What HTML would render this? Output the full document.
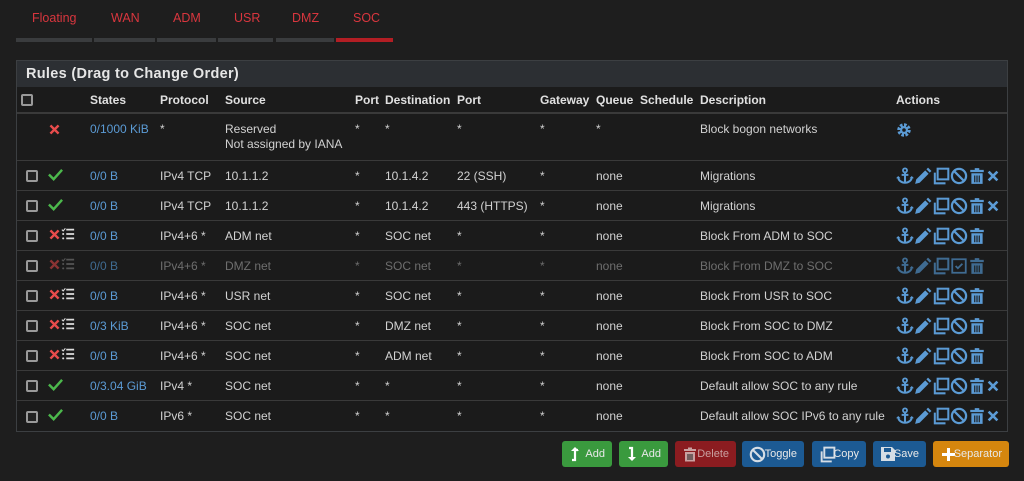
<!DOCTYPE html>
<html><head><meta charset="utf-8"><style>
*{box-sizing:border-box;margin:0;padding:0}
body{width:1024px;height:481px;background:#1e1e1e;font-family:"Liberation Sans",sans-serif;font-size:12px;color:#d2d2d2;position:relative;overflow:hidden}
.tab{position:absolute;top:11px;color:#d9363e;font-size:12.5px}
.ul{position:absolute;top:38px;height:4px;background:#3a3c3e}
.panel{position:absolute;left:16px;top:60px;width:992px;height:372px;border:1px solid #3c3f42;background:#1b1b1b}
.ph{height:26px;background:#2c2f33;color:#e6e6e6;font-size:14.5px;font-weight:bold;padding:5px 0 0 9px;letter-spacing:.3px}
table{border-collapse:collapse;table-layout:fixed;width:990px}
td,th{padding:0 0 0 4px;white-space:nowrap;overflow:visible;vertical-align:middle;text-align:left}
th{height:26px;font-weight:bold;color:#e0e0e0;border-bottom:2px solid #3a3a3a}
tr.r td{height:30px;border-top:1px solid #3a3a3a}
tr.b td{height:47px;vertical-align:top;padding-top:8px;line-height:15px}
.bl{color:#5b9bd5}
.dis td{color:#6e6e6e}.dis .bl{color:#3f6b91}
.cb{display:inline-block;width:12px;height:12px;border:2px solid #9a9a9a;border-radius:2px;background:#222;margin-left:5px;vertical-align:middle}
.ic{display:inline-block;vertical-align:middle}
.act svg{vertical-align:middle;margin-right:0}
.btn{position:absolute;top:441px;height:26px;border-radius:3px;color:#e8e8e8;font-size:11px}
.btn svg{position:absolute;left:7px;top:5px}
.btn span{position:absolute;right:7px;top:7px}
</style></head><body>
<div class="tab" style="left:32px">Floating</div>
<div class="tab" style="left:111px">WAN</div>
<div class="tab" style="left:173px">ADM</div>
<div class="tab" style="left:234px">USR</div>
<div class="tab" style="left:292px">DMZ</div>
<div class="tab" style="left:353px">SOC</div>
<div class="ul" style="left:16px;width:76px"></div>
<div class="ul" style="left:94px;width:61px"></div>
<div class="ul" style="left:157px;width:59px"></div>
<div class="ul" style="left:218px;width:55px"></div>
<div class="ul" style="left:276px;width:58px"></div>
<div class="ul" style="left:336px;width:57px;background:#b31e24"></div>

<svg width="0" height="0" style="position:absolute"><defs>
<symbol id="anc" viewBox="0 0 16 16"><circle cx="8" cy="3" r="1.8" fill="none" stroke="currentColor" stroke-width="1.6"/><path d="M8 5v9M5 7h6M2 9c0 3 3 5 6 5s6-2 6-5" fill="none" stroke="currentColor" stroke-width="1.8"/><path d="M0 10l2-2 2 2M12 10l2-2 2 2" fill="currentColor"/></symbol>
<symbol id="pen" viewBox="0 0 16 16"><path d="M1 15l1-4 8-8 3 3-8 8z M11 2l1.5-1.5 3 3L14 5z" fill="currentColor"/></symbol>
<symbol id="cp" viewBox="0 0 16 16"><rect x="5" y="1.5" width="9.5" height="9.5" fill="none" stroke="currentColor" stroke-width="1.8"/><path d="M2.5 5v9.5H12" fill="none" stroke="currentColor" stroke-width="1.8"/></symbol>
<symbol id="ban" viewBox="0 0 16 16"><circle cx="8" cy="8" r="6.3" fill="none" stroke="currentColor" stroke-width="2"/><path d="M3.5 3.5l9 9" stroke="currentColor" stroke-width="2"/></symbol>
<symbol id="chk" viewBox="0 0 16 16"><rect x="2" y="2" width="12" height="12" fill="none" stroke="currentColor" stroke-width="1.6"/><path d="M5 8l2 2 4-4" fill="none" stroke="currentColor" stroke-width="1.6"/></symbol>
<symbol id="tr" viewBox="0 0 16 16"><path d="M2 2.5h12v2H2zM6 1h4v2H6zM3 5.5h10v9.5H3z" fill="currentColor"/><path d="M6 7.5v6M8 7.5v6M10 7.5v6" stroke="#1b1b1b" stroke-width="1"/></symbol>
<symbol id="x" viewBox="0 0 16 16"><path d="M3 3l10 10M13 3L3 13" stroke="currentColor" stroke-width="3"/></symbol>
<symbol id="ok" viewBox="0 0 16 16"><path d="M1 8l5 5 9-10" fill="none" stroke="currentColor" stroke-width="2.6"/></symbol>
<symbol id="lst" viewBox="0 0 16 16"><path d="M1 3l1.5 1.5L5 1.5" fill="none" stroke="currentColor" stroke-width="1.3"/><circle cx="2.5" cy="8" r="1.2" fill="currentColor"/><circle cx="2.5" cy="13" r="1.2" fill="currentColor"/><path d="M6 3h9M6 8h9M6 13h9" stroke="currentColor" stroke-width="2"/></symbol>
</defs></svg>

<div class="panel">
<div class="ph">Rules (Drag to Change Order)</div>
<table>
<colgroup><col style="width:29px"><col style="width:40px"><col style="width:70px"><col style="width:65px"><col style="width:130px"><col style="width:30px"><col style="width:72px"><col style="width:83px"><col style="width:56px"><col style="width:44px"><col style="width:60px"><col style="width:196px"><col style="width:115px"></colgroup>
<tr><th><span class="cb" style="margin-left:0"></span></th><th></th><th>States</th><th>Protocol</th><th>Source</th><th>Port</th><th>Destination</th><th>Port</th><th>Gateway</th><th>Queue</th><th>Schedule</th><th>Description</th><th>Actions</th></tr>
<tr class="b"><td></td><td><svg class="ic" width="13" height="13" style="color:#e84c4c;margin-left:-2px"><use href="#x"/></svg></td><td class="bl">0/1000 KiB</td><td>*</td><td>Reserved<br>Not assigned by IANA</td><td>*</td><td>*</td><td>*</td><td>*</td><td>*</td><td></td><td>Block bogon networks</td><td><svg width="16" height="16" viewBox="0 0 16 16" style="color:#5b9bd5"><circle cx="8" cy="8" r="5" fill="none" stroke="currentColor" stroke-width="3.5" stroke-dasharray="2.5 1.4"/><circle cx="8" cy="8" r="4" fill="currentColor"/><circle cx="8" cy="8" r="1.8" fill="#1b1b1b"/></svg></td></tr>
</table>
<table id="t2"></table>
</div>

<div class="btn" style="left:562px;width:50px;background:#3a9a3e"><svg width="12" height="16" viewBox="0 0 12 14"><path d="M3 13h3V3h3" fill="none" stroke="#fff" stroke-width="2.2"/><path d="M6 0l4 4H2z" fill="#fff"/></svg><span>Add</span></div>
<div class="btn" style="left:619px;width:49px;background:#3a9a3e"><svg width="12" height="16" viewBox="0 0 12 14"><path d="M3 1h3v10" fill="none" stroke="#fff" stroke-width="2.2"/><path d="M2 10h8l-4 4z" fill="#fff"/></svg><span>Add</span></div>
<div class="btn" style="left:675px;width:61px;background:#8b1c20;color:#c9a0a0"><svg width="16" height="17" style="color:#c9a0a0"><use href="#tr"/></svg><span>Delete</span></div>
<div class="btn" style="left:742px;width:62px;background:#1c5a93"><svg width="17" height="17" style="color:#d5dde5"><use href="#ban"/></svg><span>Toggle</span></div>
<div class="btn" style="left:812px;width:54px;background:#1c5a93"><svg width="17" height="17" style="color:#d5dde5"><use href="#cp"/></svg><span>Copy</span></div>
<div class="btn" style="left:873px;width:53px;background:#1c5a93"><svg width="16" height="16" viewBox="0 0 16 16"><path d="M1 1h11l3 3v11H1z" fill="#d5dde5"/><rect x="4" y="2" width="7" height="4" fill="#1c5a93"/><circle cx="8" cy="10.5" r="2" fill="#1c5a93"/></svg><span>Save</span></div>
<div class="btn" style="left:933px;width:76px;background:#d5860e"><svg width="17" height="17"><path d="M8.5 2v13M2 8.5h13" stroke="#fff" stroke-width="3"/></svg><span>Separator</span></div>

<script>
var rows=[
["ok",0,"0/0 B","IPv4 TCP","10.1.1.2","10.1.4.2","22 (SSH)","Migrations",1],
["ok",0,"0/0 B","IPv4 TCP","10.1.1.2","10.1.4.2","443 (HTTPS)","Migrations",1],
["bl",0,"0/0 B","IPv4+6 *","ADM net","SOC net","*","Block From ADM to SOC",0],
["bl",1,"0/0 B","IPv4+6 *","DMZ net","SOC net","*","Block From DMZ to SOC",0],
["bl",0,"0/0 B","IPv4+6 *","USR net","SOC net","*","Block From USR to SOC",0],
["bl",0,"0/3 KiB","IPv4+6 *","SOC net","DMZ net","*","Block From SOC to DMZ",0],
["bl",0,"0/0 B","IPv4+6 *","SOC net","ADM net","*","Block From SOC to ADM",0],
["ok",0,"0/3.04 GiB","IPv4 *","SOC net","*","*","Default allow SOC to any rule",1],
["ok",0,"0/0 B","IPv6 *","SOC net","*","*","Default allow SOC IPv6 to any rule",1]];
var h='<colgroup><col style="width:29px"><col style="width:40px"><col style="width:70px"><col style="width:65px"><col style="width:130px"><col style="width:30px"><col style="width:72px"><col style="width:83px"><col style="width:56px"><col style="width:44px"><col style="width:60px"><col style="width:196px"><col style="width:115px"></colgroup>';
function s(id,w,c){return '<svg width="'+w+'" height="'+w+'" style="color:'+c+'"><use href="#'+id+'"/></svg>'}
rows.forEach(function(r){
var d=r[1],ac=d?'#3f6b91':'#5b9bd5';
var ic=r[0]=="ok"?s('ok',15,'#4cb84c'):s('x',13,d?'#8a3333':'#e84c4c')+s('lst',14,d?'#555':'#ddd');
var act=s('anc',18,ac)+s('pen',18,ac)+s('cp',18,ac)+s(d?'chk':'ban',18,ac)+s('tr',18,ac)+(r[8]?s('x',14,ac):'');
h+='<tr class="r'+(d?' dis':'')+'"><td><span class="cb"></span></td><td><span class="ic" style="margin-left:-2px">'+ic+'</span></td><td class="bl">'+r[2]+'</td><td>'+r[3]+'</td><td>'+r[4]+'</td><td>*</td><td>'+r[5]+'</td><td>'+r[6]+'</td><td>*</td><td>none</td><td></td><td>'+r[7]+'</td><td class="act">'+act+'</td></tr>';
});
document.getElementById('t2').innerHTML=h;
</script>
</body></html>
